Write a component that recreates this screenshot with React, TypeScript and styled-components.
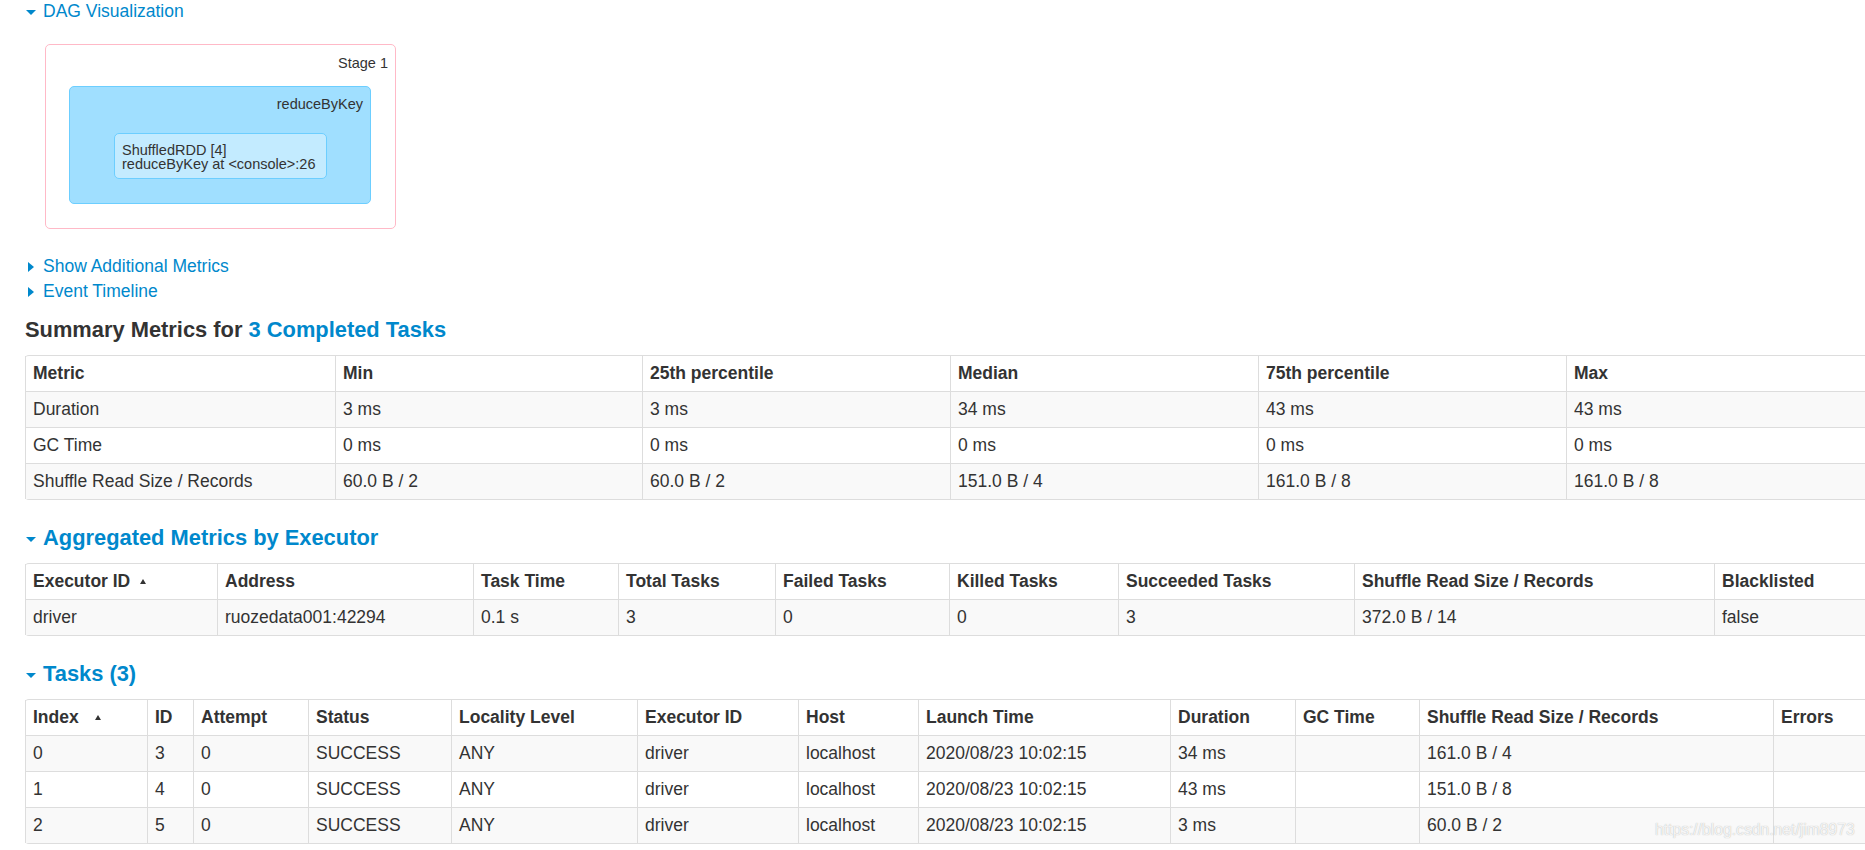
import React from 'react';
import styled, { createGlobalStyle } from 'styled-components';

const GlobalStyle = createGlobalStyle`
  html, body {
    margin: 0;
    padding: 0;
    background: #fff;
    overflow: hidden;
  }
  body {
    font-family: "Liberation Sans", Arial, Helvetica, sans-serif;
    font-size: 17.5px;
    line-height: 25px;
    color: #333;
  }
`;

const Page = styled.div`
  position: relative;
  width: 1900px;
  padding: 0 0 0 25px;
`;

const Toggle = styled.div<{ $top?: number }>`
  height: 25px;
  line-height: 25px;
  margin-top: ${({ $top }) => $top ?? 0}px;
  color: #0088cc;
  cursor: pointer;
  white-space: nowrap;
`;

const Arrow = styled.span<{ $open?: boolean; $size: number; $left: number; $right: number }>`
  display: inline-block;
  width: 0;
  height: 0;
  vertical-align: middle;
  margin-left: ${({ $left }) => $left}px;
  margin-right: ${({ $right }) => $right}px;
  ${({ $open, $size }) =>
    $open
      ? `border-left: ${$size}px solid transparent;
         border-right: ${$size}px solid transparent;
         border-top: ${$size}px solid #0088cc;`
      : `border-top: ${$size}px solid transparent;
         border-bottom: ${$size}px solid transparent;
         border-left: ${$size + 0.5}px solid #0088cc;`}
`;

const SectionTitle = styled.h4<{ $link?: boolean }>`
  margin: 13px 0;
  font-size: 21.875px;
  line-height: 25px;
  font-weight: bold;
  white-space: nowrap;
  color: ${({ $link }) => ($link ? '#0088cc' : '#333')};
`;

const Link = styled.span`
  color: #0088cc;
`;

/* DAG */
const DagWrap = styled.div`
  margin: 20px 0 0 20px;
`;

const StageBox = styled.div`
  width: 351px;
  height: 185px;
  box-sizing: border-box;
  border: 1px solid #ffb9c7;
  border-radius: 5px;
  background: #fff;
  padding: 10px 7px 0 23px;
`;

const GraphLabel = styled.div`
  font-size: 14.5px;
  line-height: 16px;
  text-align: right;
  color: #333;
  white-space: nowrap;
`;

const ClusterBox = styled.div`
  margin-top: 15px;
  width: 302px;
  height: 118px;
  box-sizing: border-box;
  border: 1px solid #6cceff;
  border-radius: 5px;
  background: #a0dfff;
  padding: 9px 7px 0 44px;
`;

const RddNode = styled.div`
  margin-top: 21px;
  width: 213px;
  height: 46px;
  box-sizing: border-box;
  border: 1px solid #6cceff;
  border-radius: 5px;
  background: #c3ebff;
  padding: 9px 7px 0 7px;
  font-size: 14.5px;
  line-height: 14px;
  color: #333;
  white-space: nowrap;
`;

/* Tables */
const Table = styled.table<{ $width: number }>`
  width: ${({ $width }) => $width}px;
  table-layout: fixed;
  border-collapse: separate;
  border-spacing: 0;
  border: 1px solid #ddd;
  border-left: 0;
  border-radius: 4px;
  margin: 0 0 25px 0;
  font-size: 17.5px;
  line-height: 25px;

  tbody tr:nth-child(odd) td {
    background: #f9f9f9;
  }
`;

const Th = styled.th`
  text-align: left;
  font-weight: bold;
  padding: 5px 7px;
  border-left: 1px solid #ddd;
  white-space: nowrap;
  overflow: hidden;
  vertical-align: top;
`;

const Td = styled.td`
  padding: 5px 7px;
  height: 25px;
  border-left: 1px solid #ddd;
  border-top: 1px solid #ddd;
  white-space: nowrap;
  overflow: hidden;
  vertical-align: top;
`;

const SortMark = styled.span<{ $gap: number }>`
  display: inline-block;
  width: 0;
  height: 0;
  margin-left: ${({ $gap }) => $gap}px;
  vertical-align: 3.5px;
  border-left: 3px solid transparent;
  border-right: 3px solid transparent;
  border-bottom: 5px solid #333;
`;

const Watermark = styled.div`
  position: absolute;
  left: 1655px;
  top: 822px;
  font-size: 15.7px;
  line-height: 18px;
  color: rgba(255, 255, 255, 0.85);
  text-shadow: 0 0 1px rgba(120, 120, 120, 0.6);
  white-space: nowrap;
  pointer-events: none;
`;

interface Column {
  label: string;
  width: number;
  sortGap?: number;
}

interface DataTableProps {
  columns: Column[];
  rows: string[][];
}

const DataTable: React.FC<DataTableProps> = ({ columns, rows }) => {
  const total = columns.reduce((s, c) => s + c.width, 0) + 1;
  return (
    <Table $width={total}>
      <colgroup>
        {columns.map((c, i) => (
          <col key={i} style={{ width: c.width }} />
        ))}
      </colgroup>
      <thead>
        <tr>
          {columns.map((c, i) => (
            <Th key={i}>
              {c.label}
              {c.sortGap !== undefined && <SortMark $gap={c.sortGap} />}
            </Th>
          ))}
        </tr>
      </thead>
      <tbody>
        {rows.map((r, i) => (
          <tr key={i}>
            {r.map((v, j) => (
              <Td key={j}>{v}</Td>
            ))}
          </tr>
        ))}
      </tbody>
    </Table>
  );
};

const summaryColumns: Column[] = [
  { label: 'Metric', width: 310 },
  { label: 'Min', width: 307 },
  { label: '25th percentile', width: 308 },
  { label: 'Median', width: 308 },
  { label: '75th percentile', width: 308 },
  { label: 'Max', width: 308 },
];

const summaryRows = [
  ['Duration', '3 ms', '3 ms', '34 ms', '43 ms', '43 ms'],
  ['GC Time', '0 ms', '0 ms', '0 ms', '0 ms', '0 ms'],
  ['Shuffle Read Size / Records', '60.0 B / 2', '60.0 B / 2', '151.0 B / 4', '161.0 B / 8', '161.0 B / 8'],
];

const executorColumns: Column[] = [
  { label: 'Executor ID', width: 192, sortGap: 10 },
  { label: 'Address', width: 256 },
  { label: 'Task Time', width: 145 },
  { label: 'Total Tasks', width: 157 },
  { label: 'Failed Tasks', width: 174 },
  { label: 'Killed Tasks', width: 169 },
  { label: 'Succeeded Tasks', width: 236 },
  { label: 'Shuffle Read Size / Records', width: 360 },
  { label: 'Blacklisted', width: 200 },
];

const executorRows = [
  ['driver', 'ruozedata001:42294', '0.1 s', '3', '0', '0', '3', '372.0 B / 14', 'false'],
];

const taskColumns: Column[] = [
  { label: 'Index', width: 122, sortGap: 16 },
  { label: 'ID', width: 46 },
  { label: 'Attempt', width: 115 },
  { label: 'Status', width: 143 },
  { label: 'Locality Level', width: 186 },
  { label: 'Executor ID', width: 161 },
  { label: 'Host', width: 120 },
  { label: 'Launch Time', width: 252 },
  { label: 'Duration', width: 125 },
  { label: 'GC Time', width: 124 },
  { label: 'Shuffle Read Size / Records', width: 354 },
  { label: 'Errors', width: 150 },
];

const taskRows = [
  ['0', '3', '0', 'SUCCESS', 'ANY', 'driver', 'localhost', '2020/08/23 10:02:15', '34 ms', '', '161.0 B / 4', ''],
  ['1', '4', '0', 'SUCCESS', 'ANY', 'driver', 'localhost', '2020/08/23 10:02:15', '43 ms', '', '151.0 B / 8', ''],
  ['2', '5', '0', 'SUCCESS', 'ANY', 'driver', 'localhost', '2020/08/23 10:02:15', '3 ms', '', '60.0 B / 2', ''],
];

const App: React.FC = () => {
  return (
    <Page>
      <GlobalStyle />
      <Toggle $top={-1}>
        <Arrow $open $size={5} $left={1} $right={7} />
        DAG Visualization
      </Toggle>

      <DagWrap>
        <StageBox>
          <GraphLabel>Stage 1</GraphLabel>
          <ClusterBox>
            <GraphLabel>reduceByKey</GraphLabel>
            <RddNode>
              ShuffledRDD [4]
              <br />
              reduceByKey at &lt;console&gt;:26
            </RddNode>
          </ClusterBox>
        </StageBox>
      </DagWrap>

      <Toggle $top={25}>
        <Arrow $size={5.5} $left={3} $right={9} />
        Show Additional Metrics
      </Toggle>
      <Toggle>
        <Arrow $size={5.5} $left={3} $right={9} />
        Event Timeline
      </Toggle>

      <SectionTitle>
        Summary Metrics for <Link>3 Completed Tasks</Link>
      </SectionTitle>
      <DataTable columns={summaryColumns} rows={summaryRows} />

      <SectionTitle $link>
        <Arrow $open $size={5.5} $left={1} $right={7} />
        Aggregated Metrics by Executor
      </SectionTitle>
      <DataTable columns={executorColumns} rows={executorRows} />

      <SectionTitle $link>
        <Arrow $open $size={5.5} $left={1} $right={7} />
        Tasks (3)
      </SectionTitle>
      <DataTable columns={taskColumns} rows={taskRows} />

      <Watermark>https://blog.csdn.net/jim8973</Watermark>
    </Page>
  );
};

export default App;
